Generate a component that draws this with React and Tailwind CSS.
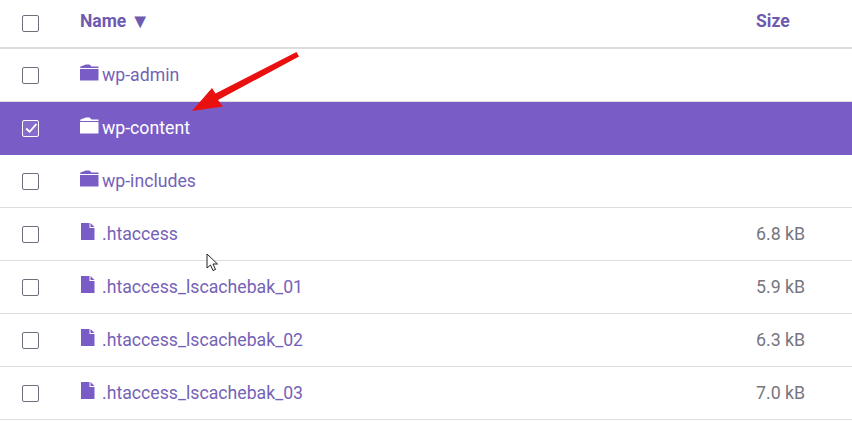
const rows = [
  { name: 'wp-admin', type: 'folder' },
  { name: 'wp-content', type: 'folder', selected: true },
  { name: 'wp-includes', type: 'folder' },
  { name: '.htaccess', type: 'file', size: '6.8 kB' },
  { name: '.htaccess_lscachebak_01', type: 'file', size: '5.9 kB' },
  { name: '.htaccess_lscachebak_02', type: 'file', size: '6.3 kB' },
  { name: '.htaccess_lscachebak_03', type: 'file', size: '7.0 kB' },
];

function Checkbox({ checked }) {
  return (
    <span className={`flex h-[17px] w-[17px] items-center justify-center rounded-[2px] border ${checked ? 'border-white bg-white/10' : 'border-[#6f6f80] bg-white'}`}>
      {checked && (
        <svg width="14" height="14" viewBox="0 0 13 13" fill="none" stroke="white" strokeWidth="1.7">
          <path d="M2 7l3.200 3L11.500 3" />
        </svg>
      )}
    </span>
  );
}

function FolderIcon() {
  return (
    <svg width="19" height="17" viewBox="0 0 19 17" fill="currentColor" className="shrink-0">
      <path d="M0 4.500L0.500 2.500 6 0.500h3.500L11.500 2.500H18.500V4H0z" />
      <rect x="0" y="5" width="18.500" height="11.500" />
    </svg>
  );
}

function FileIcon() {
  return (
    <svg width="14" height="17" viewBox="0 0 14 17" fill="currentColor" className="ml-px shrink-0">
      <path d="M0 0h8.500v5h5v12H0z" />
      <path d="M9.500 0l4 4h-4z" />
    </svg>
  );
}

function Row({ name, type, size, selected }) {
  return (
    <div className={`flex h-[53px] items-center border-b ${selected ? 'border-[#7a5cc6] bg-[#7a5cc6] text-white' : 'border-[#dedede] text-[#7562b6]'}`}>
      <div className="flex w-[80px] shrink-0 pl-[22px]">
        <Checkbox checked={selected} />
      </div>
      <div className="flex flex-1 items-center gap-[3px] text-[17.700px]">
        <span className={`-mt-[4px] flex w-[19px] ${selected ? 'text-white' : 'text-[#7a5cc6]'}`}>
          {type === 'folder' ? <FolderIcon /> : <FileIcon />}
        </span>
        {name}
      </div>
      <div className="w-[96px] shrink-0 text-[17.800px] text-[#76767f]">{size}</div>
    </div>
  );
}

export default function App() {
  return (
    <div className="relative h-[421px] w-[852px] overflow-hidden bg-white font-['Roboto',sans-serif]">
      <div className="flex h-[49px] items-center border-b-2 border-[#dcdcdc] text-[17.500px] font-bold text-[#6e5ab0]">
        <div className="flex w-[80px] shrink-0 pl-[22px]">
          <Checkbox />
        </div>
        <div className="-mt-[5px] flex flex-1 items-center gap-[4px]">
          Name <span className="text-[20px] leading-none">▼</span>
        </div>
        <div className="-mt-[5px] w-[96px] shrink-0">Size</div>
      </div>
      {rows.map((row) => (
        <Row key={row.name} {...row} />
      ))}
      {/* arrow drawn on top of the screenshot */}
      <svg className="absolute left-[185px] top-[48px]" width="120" height="70" viewBox="0 0 120 70" fill="#ea1010">
        <path d="M111.500 4L114 8.500 33 52 38 58.500 7 63 27 40 30.500 45.500z" />
      </svg>
      {/* mouse pointer */}
      <svg className="absolute left-[205px] top-[253px]" width="15" height="20" viewBox="0 0 15 20" fill="white" stroke="#222" strokeWidth="1">
        <path d="M2 1v14l3.500-3 2.500 5.500 2.500-1L8 11h4.500z" />
      </svg>
    </div>
  );
}
